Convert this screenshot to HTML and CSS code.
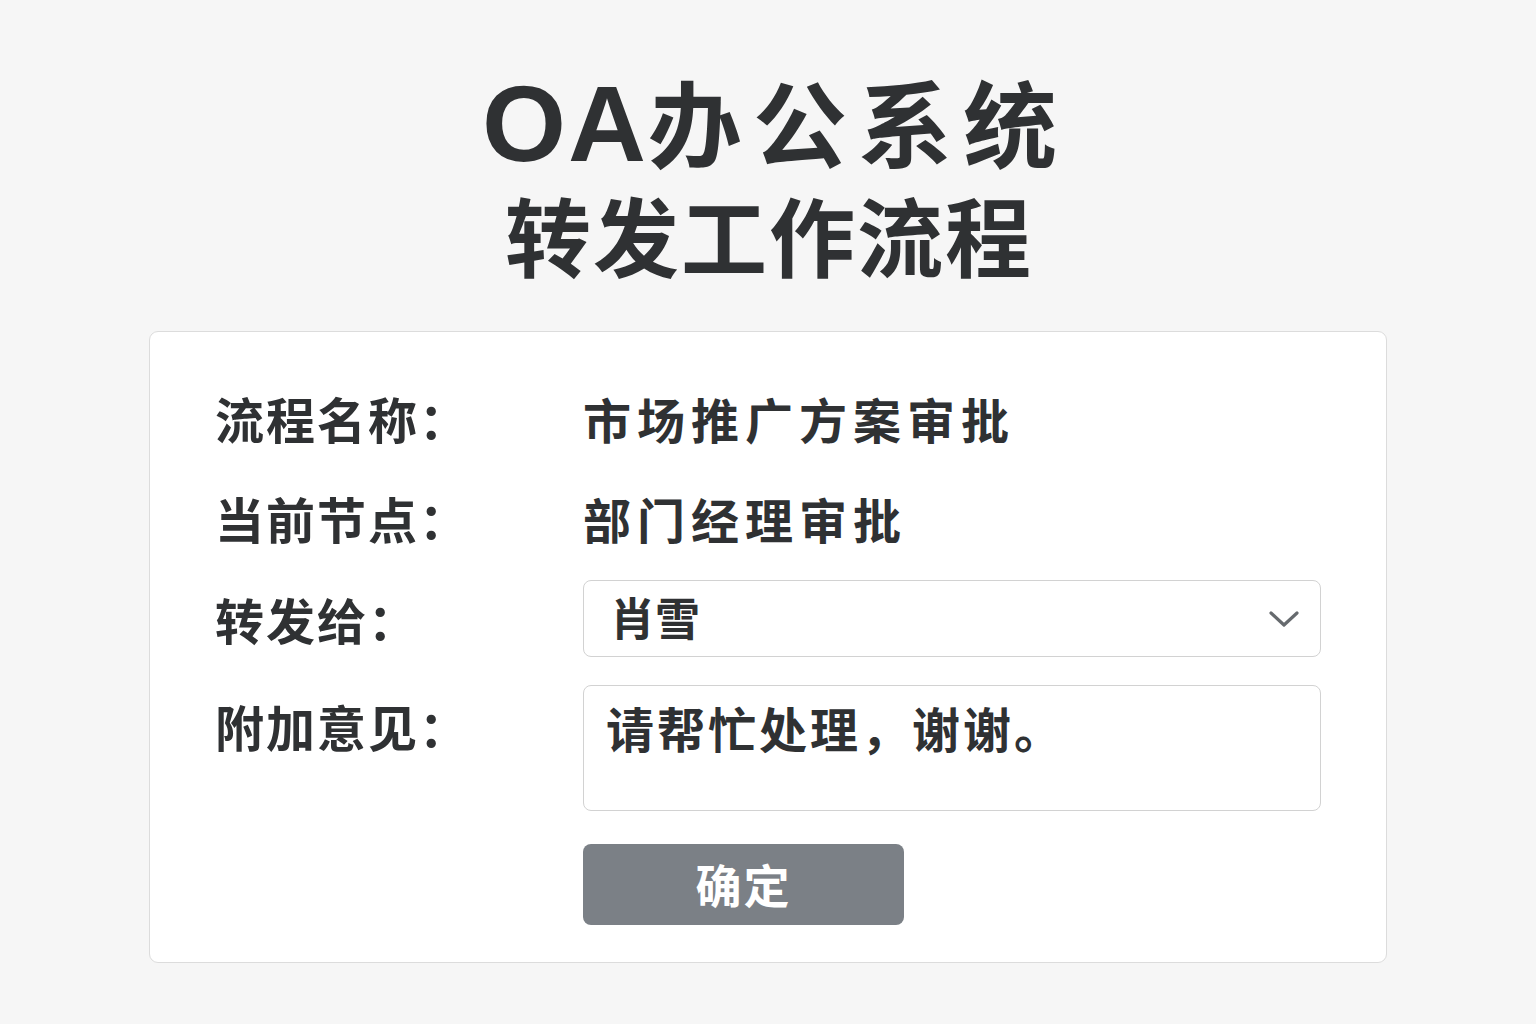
FILE: index.html
```html
<!DOCTYPE html>
<html lang="zh-CN">
<head>
<meta charset="utf-8">
<title>OA办公系统 - 转发工作流程</title>
<link rel="stylesheet" href="styles.css">
</head>
<body>
<header class="title">
  <h1 class="title-main"><span class="title-latin">OA</span>办公系统</h1>
  <h2 class="title-sub">转发工作流程</h2>
</header>
<main class="card">
  <div class="row row-text">
    <div class="label">流程名称：</div>
    <div class="value">市场推广方案审批</div>
  </div>
  <div class="row row-text">
    <div class="label">当前节点：</div>
    <div class="value">部门经理审批</div>
  </div>
  <div class="row row-select">
    <div class="label">转发给：</div>
    <div class="select">
      <span class="select-text">肖雪</span>
      <svg class="chevron" width="32" height="20" viewBox="0 0 32 20"><polyline points="3,4 16,16 29,4" fill="none" stroke="#666a6e" stroke-width="3.2" stroke-linecap="round" stroke-linejoin="round"/></svg>
    </div>
  </div>
  <div class="row row-area">
    <div class="label label-top">附加意见：</div>
    <div class="textarea">请帮忙处理，谢谢。</div>
  </div>
  <div class="row row-btn">
    <div class="label"></div>
    <button class="btn">确定</button>
  </div>
</main>
</body>
</html>
```

FILE: styles.css
```css
* { box-sizing: border-box; }
html, body {
  margin: 0;
  padding: 0;
  background: #f6f6f6;
  font-family: "Noto Sans CJK SC", "Noto Sans", sans-serif;
  color: #2f3133;
}
.title {
  padding-top: 63px;
  text-align: center;
}
.title-main {
  margin: 0;
  height: 114px;
  padding-left: 14px;
  font-size: 94px;
  line-height: 114px;
  font-weight: 700;
  letter-spacing: 11px;
}
.title-latin {
  font-family: "Liberation Sans", "Noto Sans", sans-serif;
  font-size: 108px;
  line-height: 1;
  letter-spacing: 2px;
}
.title-sub {
  margin: 0;
  padding-left: 2px;
  font-size: 86px;
  line-height: 114px;
  font-weight: 700;
  letter-spacing: 2px;
}
.card {
  width: 1238px;
  height: 632px;
  margin: 40px auto 0;
  background: #ffffff;
  border: 1.5px solid #dcdcdc;
  border-radius: 9px;
  padding: 36px 65px 0 65px;
  display: flex;
  flex-direction: column;
}
.row {
  display: flex;
  align-items: center;
}
.row-text { height: 100px; }
.row-select { margin-top: 12px; height: 77px; }
.row-area { margin-top: 28px; align-items: flex-start; }
.row-btn { margin-top: 33px; }
.label {
  width: 368px;
  flex: none;
  font-size: 49px;
  font-weight: 700;
  letter-spacing: 2px;
  line-height: 60px;
}
.label-top { padding-top: 11px; }
.value {
  font-size: 48px;
  font-weight: 700;
  letter-spacing: 6px;
  line-height: 60px;
}
.select {
  width: 738px;
  height: 77px;
  border: 1.5px solid #d2d2d2;
  border-radius: 8px;
  display: flex;
  align-items: center;
  justify-content: space-between;
  padding: 0 20px 0 26px;
}
.select-text {
  font-size: 45px;
  font-weight: 700;
  letter-spacing: 0px;
  line-height: 60px;
  margin-top: -4px;
}
.chevron { display: block; }
.textarea {
  width: 738px;
  height: 126px;
  border: 1.5px solid #d2d2d2;
  border-radius: 8px;
  padding: 11px 20px 0 22px;
  font-size: 48px;
  font-weight: 700;
  letter-spacing: 3px;
  line-height: 60px;
}
.btn {
  width: 321px;
  height: 81px;
  border: none;
  border-radius: 8px;
  background: #7b8086;
  color: #ffffff;
  font-family: "Noto Sans CJK SC", "Noto Sans", sans-serif;
  font-size: 46px;
  font-weight: 700;
  letter-spacing: 2px;
  padding: 0 0 4px 0;
}
```
